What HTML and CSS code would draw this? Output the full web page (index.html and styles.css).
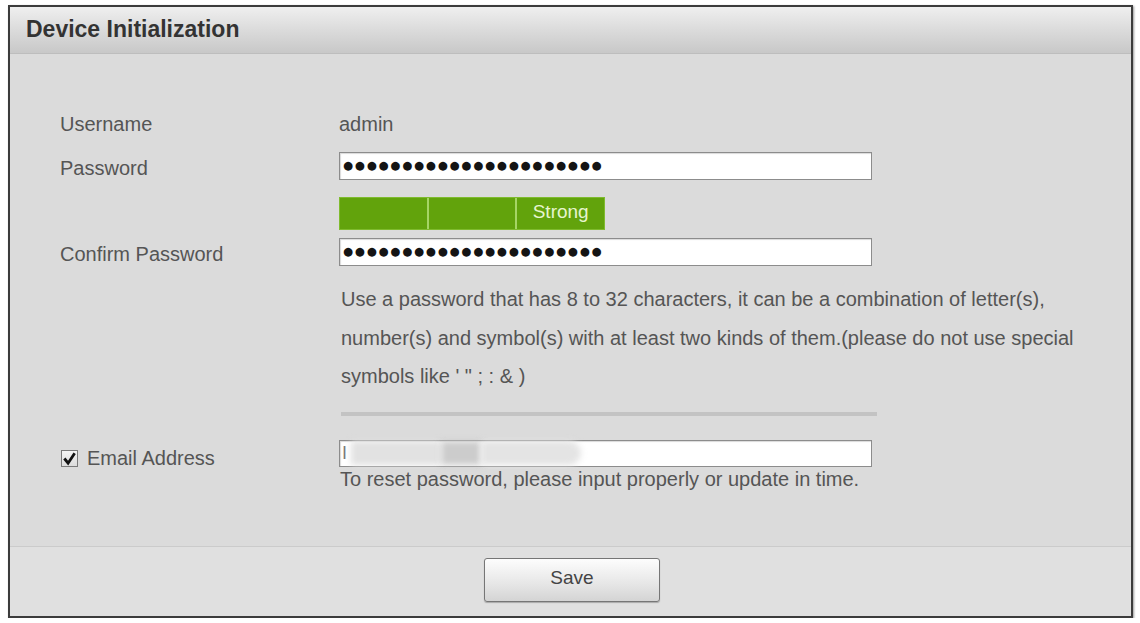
FILE: index.html
```html
<!DOCTYPE html>
<html>
<head>
<meta charset="utf-8">
<link rel="stylesheet" href="styles.css">
</head>
<body>
<div class="panel">
  <div class="header">Device Initialization</div>
  <div class="content">
    <div class="row row-user">
      <div class="label">Username</div>
      <div class="value text">admin</div>
    </div>
    <div class="row row-pass">
      <div class="label">Password</div>
      <div class="field"><span class="dots">●●●●●●●●●●●●●●●●●●●●●●</span></div>
    </div>
    <div class="row row-strength">
      <div class="label"></div>
      <div class="strength">
        <div class="seg"></div>
        <div class="seg"></div>
        <div class="seg">Strong</div>
      </div>
    </div>
    <div class="row row-confirm">
      <div class="label">Confirm Password</div>
      <div class="field"><span class="dots">●●●●●●●●●●●●●●●●●●●●●●</span></div>
    </div>
    <div class="row row-hint">
      <div class="label"></div>
      <div class="hint">Use a password that has 8 to 32 characters, it can be a combination of letter(s), number(s) and symbol(s) with at least two kinds of them.(please do not use special symbols like ' " ; : &amp; )</div>
    </div>
    <div class="row row-divider">
      <div class="label"></div>
      <div class="divider"></div>
    </div>
    <div class="row row-email">
      <div class="label check-label"><span class="checkbox"><svg viewBox="0 0 16 16" width="15" height="15"><path d="M2.5 8 L6.5 13 L13.5 2.5" fill="none" stroke="#111" stroke-width="3" stroke-linejoin="miter"/></svg></span>Email Address</div>
      <div class="email-col">
        <div class="field email"><span class="caret">I</span><span class="blur b1"></span><span class="blur b2"></span><span class="blur b3"></span></div>
        <div class="reset">To reset password, please input properly or update in time.</div>
      </div>
    </div>
  </div>
  <div class="footer">
    <button class="save">Save</button>
  </div>
</div>
</body>
</html>
```
FILE: styles.css
```css
html, body {
  margin: 0;
  padding: 0;
  background: #ffffff;
}
body {
  font-family: "Liberation Sans", Arial, sans-serif;
  color: #555;
}
.panel {
  box-sizing: border-box;
  width: 1125px;
  height: 613px;
  margin: 5px 0 0 8px;
  border: 2px solid #3c3c3c;
  box-shadow: 1px 1px 2px rgba(0,0,0,0.4);
  background: #dbdbdb;
  display: flex;
  flex-direction: column;
}
.header {
  height: 47px;
  box-sizing: border-box;
  border-bottom: 1px solid #bdbdbd;
  background: linear-gradient(#efefef, #d9d9d9 55%, #c8c8c8);
  padding-left: 16px;
  font-weight: bold;
  font-size: 23px;
  color: #333;
  display: flex;
  align-items: center;
  padding-bottom: 2px;
}
.content {
  flex: 1;
  padding: 56px 0 0 50px;
}
.row {
  display: flex;
  align-items: center;
}
.label {
  width: 279px;
  flex: none;
  font-size: 20px;
  color: #555;
}
.text {
  font-size: 20px;
  color: #555;
}
.row-user { height: 28px; }
.row-pass { margin-top: 14px; }
.row-pass .label { padding-top: 5px; }
.row-confirm .label { padding-top: 4px; }
.field {
  box-sizing: border-box;
  width: 533px;
  height: 28px;
  background: #fff;
  border: 1px solid #8c8c8c;
  box-shadow: inset 1px 1px 1px rgba(0,0,0,0.15);
  display: flex;
  align-items: center;
  padding-left: 3px;
}
.dots {
  font-family: "DejaVu Sans", sans-serif;
  font-size: 11.5px;
  letter-spacing: 1.8px;
  color: #141414;
  line-height: 1;
}
.row-strength { margin-top: 17px; }
.strength {
  display: flex;
  height: 33px;
  width: 266px;
  background: #62a30c;
  border: 1px solid #7fbb2e;
  box-sizing: border-box;
}
.seg {
  flex: 1;
  border-left: 2px solid #a6d565;
  color: #e6f5cf;
  font-size: 19px;
  display: flex;
  align-items: center;
  justify-content: center;
  padding-bottom: 4px;
}
.seg:first-child { border-left: none; }
.row-confirm { margin-top: 8px; }
.row-hint { margin-top: 14px; align-items: flex-start; }
.hint {
  width: 735px;
  font-size: 20px;
  line-height: 38.5px;
  color: #555;
  padding-left: 2px;
}
.row-divider { margin-top: 16px; }
.divider {
  margin-left: 2px;
  width: 536px;
  height: 4px;
  background: #c3c3c3;
}
.row-email { margin-top: 24px; align-items: flex-start; }
.check-label {
  display: flex;
  align-items: center;
  padding-top: 7px;
  margin-left: 1px;
  width: 278px;
}
.checkbox {
  box-sizing: border-box;
  width: 17px;
  height: 17px;
  border: 1px solid #7a7a7a;
  background: linear-gradient(#f4f4f4, #dcdcdc);
  display: inline-flex;
  align-items: center;
  justify-content: center;
  margin-right: 9px;
}
.email-col {
  display: flex;
  flex-direction: column;
}
.email {
  height: 27px;
  padding-left: 2px;
}
.caret {
  font-size: 18px;
  color: #777;
  font-weight: normal;
  line-height: 1;
}
.blur {
  display: inline-block;
  height: 24px;
  background: #d8d8d8;
  filter: blur(3px);
}
.b1 { width: 90px; background: #e2e2e2; margin-left: 4px; }
.b2 { width: 40px; background: #cccccc; }
.b3 { width: 100px; background: #e4e4e4; border-radius: 0 12px 12px 0; }
.reset {
  font-size: 20px;
  color: #555;
  line-height: 22px;
  margin-top: 1px;
  padding-left: 1px;
}
.footer {
  height: 70px;
  box-sizing: border-box;
  border-top: 1px solid #cbcbcb;
  background: #e0e0e0;
  display: flex;
  justify-content: center;
  padding-top: 11px;
}
.save {
  width: 176px;
  height: 44px;
  border: 1px solid #767676;
  border-radius: 3px;
  background: linear-gradient(#fdfdfd, #e6e6e6 60%, #d4d4d4);
  box-shadow: 0 1px 1px rgba(0,0,0,0.25);
  font-family: "Liberation Sans", Arial, sans-serif;
  font-size: 19px;
  color: #444;
  padding: 0;
  padding-bottom: 4px;
  margin-left: 3px;
}
```
